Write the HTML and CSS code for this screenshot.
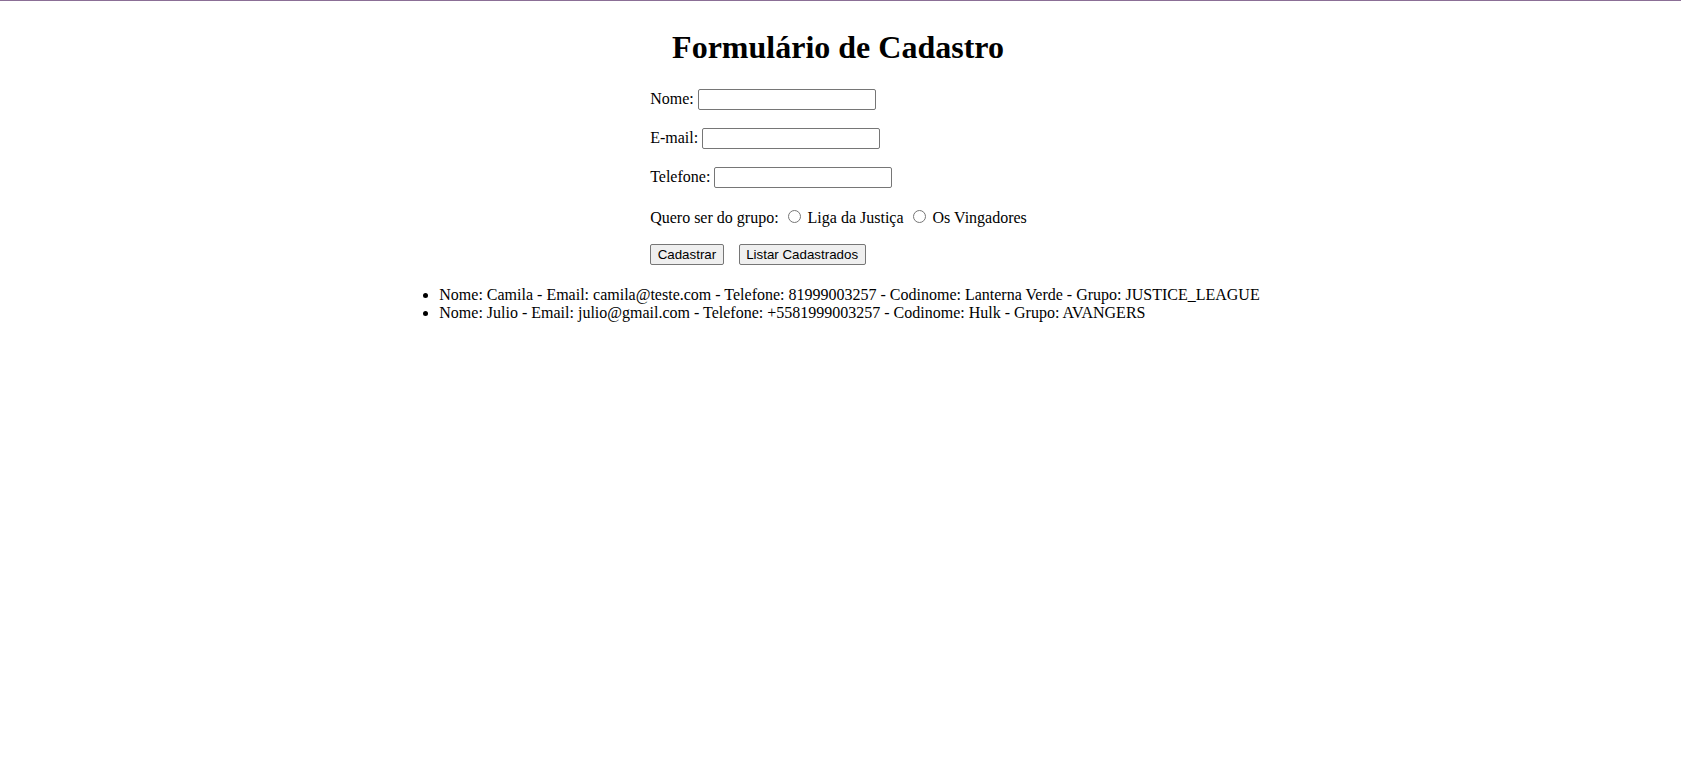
FILE: index.html
```html
<!DOCTYPE html>
<html lang="pt-BR">
<head>
<meta charset="utf-8">
<title>Formulário de Cadastro</title>
<link rel="stylesheet" href="styles.css">
</head>
<body class="page">
<div class="top-line"></div>
<main class="wrap">
  <h1 class="title">Formulário de Cadastro</h1>
  <form class="form">
    <p class="row"><label>Nome: <input class="field" type="text"></label></p>
    <p class="row"><label>E-mail: <input class="field" type="email"></label></p>
    <p class="row"><label>Telefone: <input class="field" type="tel"></label></p>
    <p class="row">Quero ser do grupo: <input class="radio" type="radio" name="grupo"> Liga da Justiça <input class="radio" type="radio" name="grupo"> Os Vingadores</p>
    <p class="row buttons"><button class="btn btn-first" type="button">Cadastrar</button><button class="btn" type="button">Listar Cadastrados</button></p>
  </form>
  <ul class="list">
    <li>Nome: Camila - Email: camila@teste.com - Telefone: 81999003257 - Codinome: Lanterna Verde - Grupo: JUSTICE_LEAGUE</li>
    <li>Nome: Julio - Email: julio@gmail.com - Telefone: +5581999003257 - Codinome: Hulk - Grupo: AVANGERS</li>
  </ul>
</main>
</body>
</html>
```
FILE: styles.css
```css
html, body {
  background: #ffffff;
}
.page {
  margin: 8px;
  font-family: "Liberation Serif", "Times New Roman", serif;
  font-size: 16px;
  color: #000;
}
.top-line {
  position: fixed;
  top: 0;
  left: 0;
  right: 0;
  height: 1px;
  background: #8b6f96;
}
.wrap {
  display: block;
}
.title {
  font-size: 32px;
  font-weight: bold;
  margin: 21.44px 0;
  text-align: center;
  padding-right: 5px;
}
.form {
  width: fit-content;
  margin: 0 auto;
  padding-right: 4px;
}
.row {
  margin: 16px 0;
}
.field {
  box-sizing: border-box;
  width: 178px;
  height: 21px;
  margin: 1px 0;
  padding: 1px 2px;
  border: 1px solid #767676;
  border-radius: 2px;
  font-family: "Liberation Sans", Arial, sans-serif;
  font-size: 13.33px;
  vertical-align: baseline;
}
.radio {
  width: 13px;
  height: 13px;
  margin: 5px 3px 0 5px;
}
.btn {
  box-sizing: border-box;
  height: 21px;
  padding: 1px 6.5px;
  margin: 1px 0;
  font-family: "Liberation Sans", Arial, sans-serif;
  font-size: 13.33px;
  color: #000;
  background: #efefef;
  border: 1px solid #767676;
  border-radius: 2px;
}
.btn-first {
  margin-right: 15px;
}
.list {
  width: fit-content;
  margin: 20px auto 16px;
  padding-left: 40px;
  padding-right: 22px;
  list-style: disc;
}
```
